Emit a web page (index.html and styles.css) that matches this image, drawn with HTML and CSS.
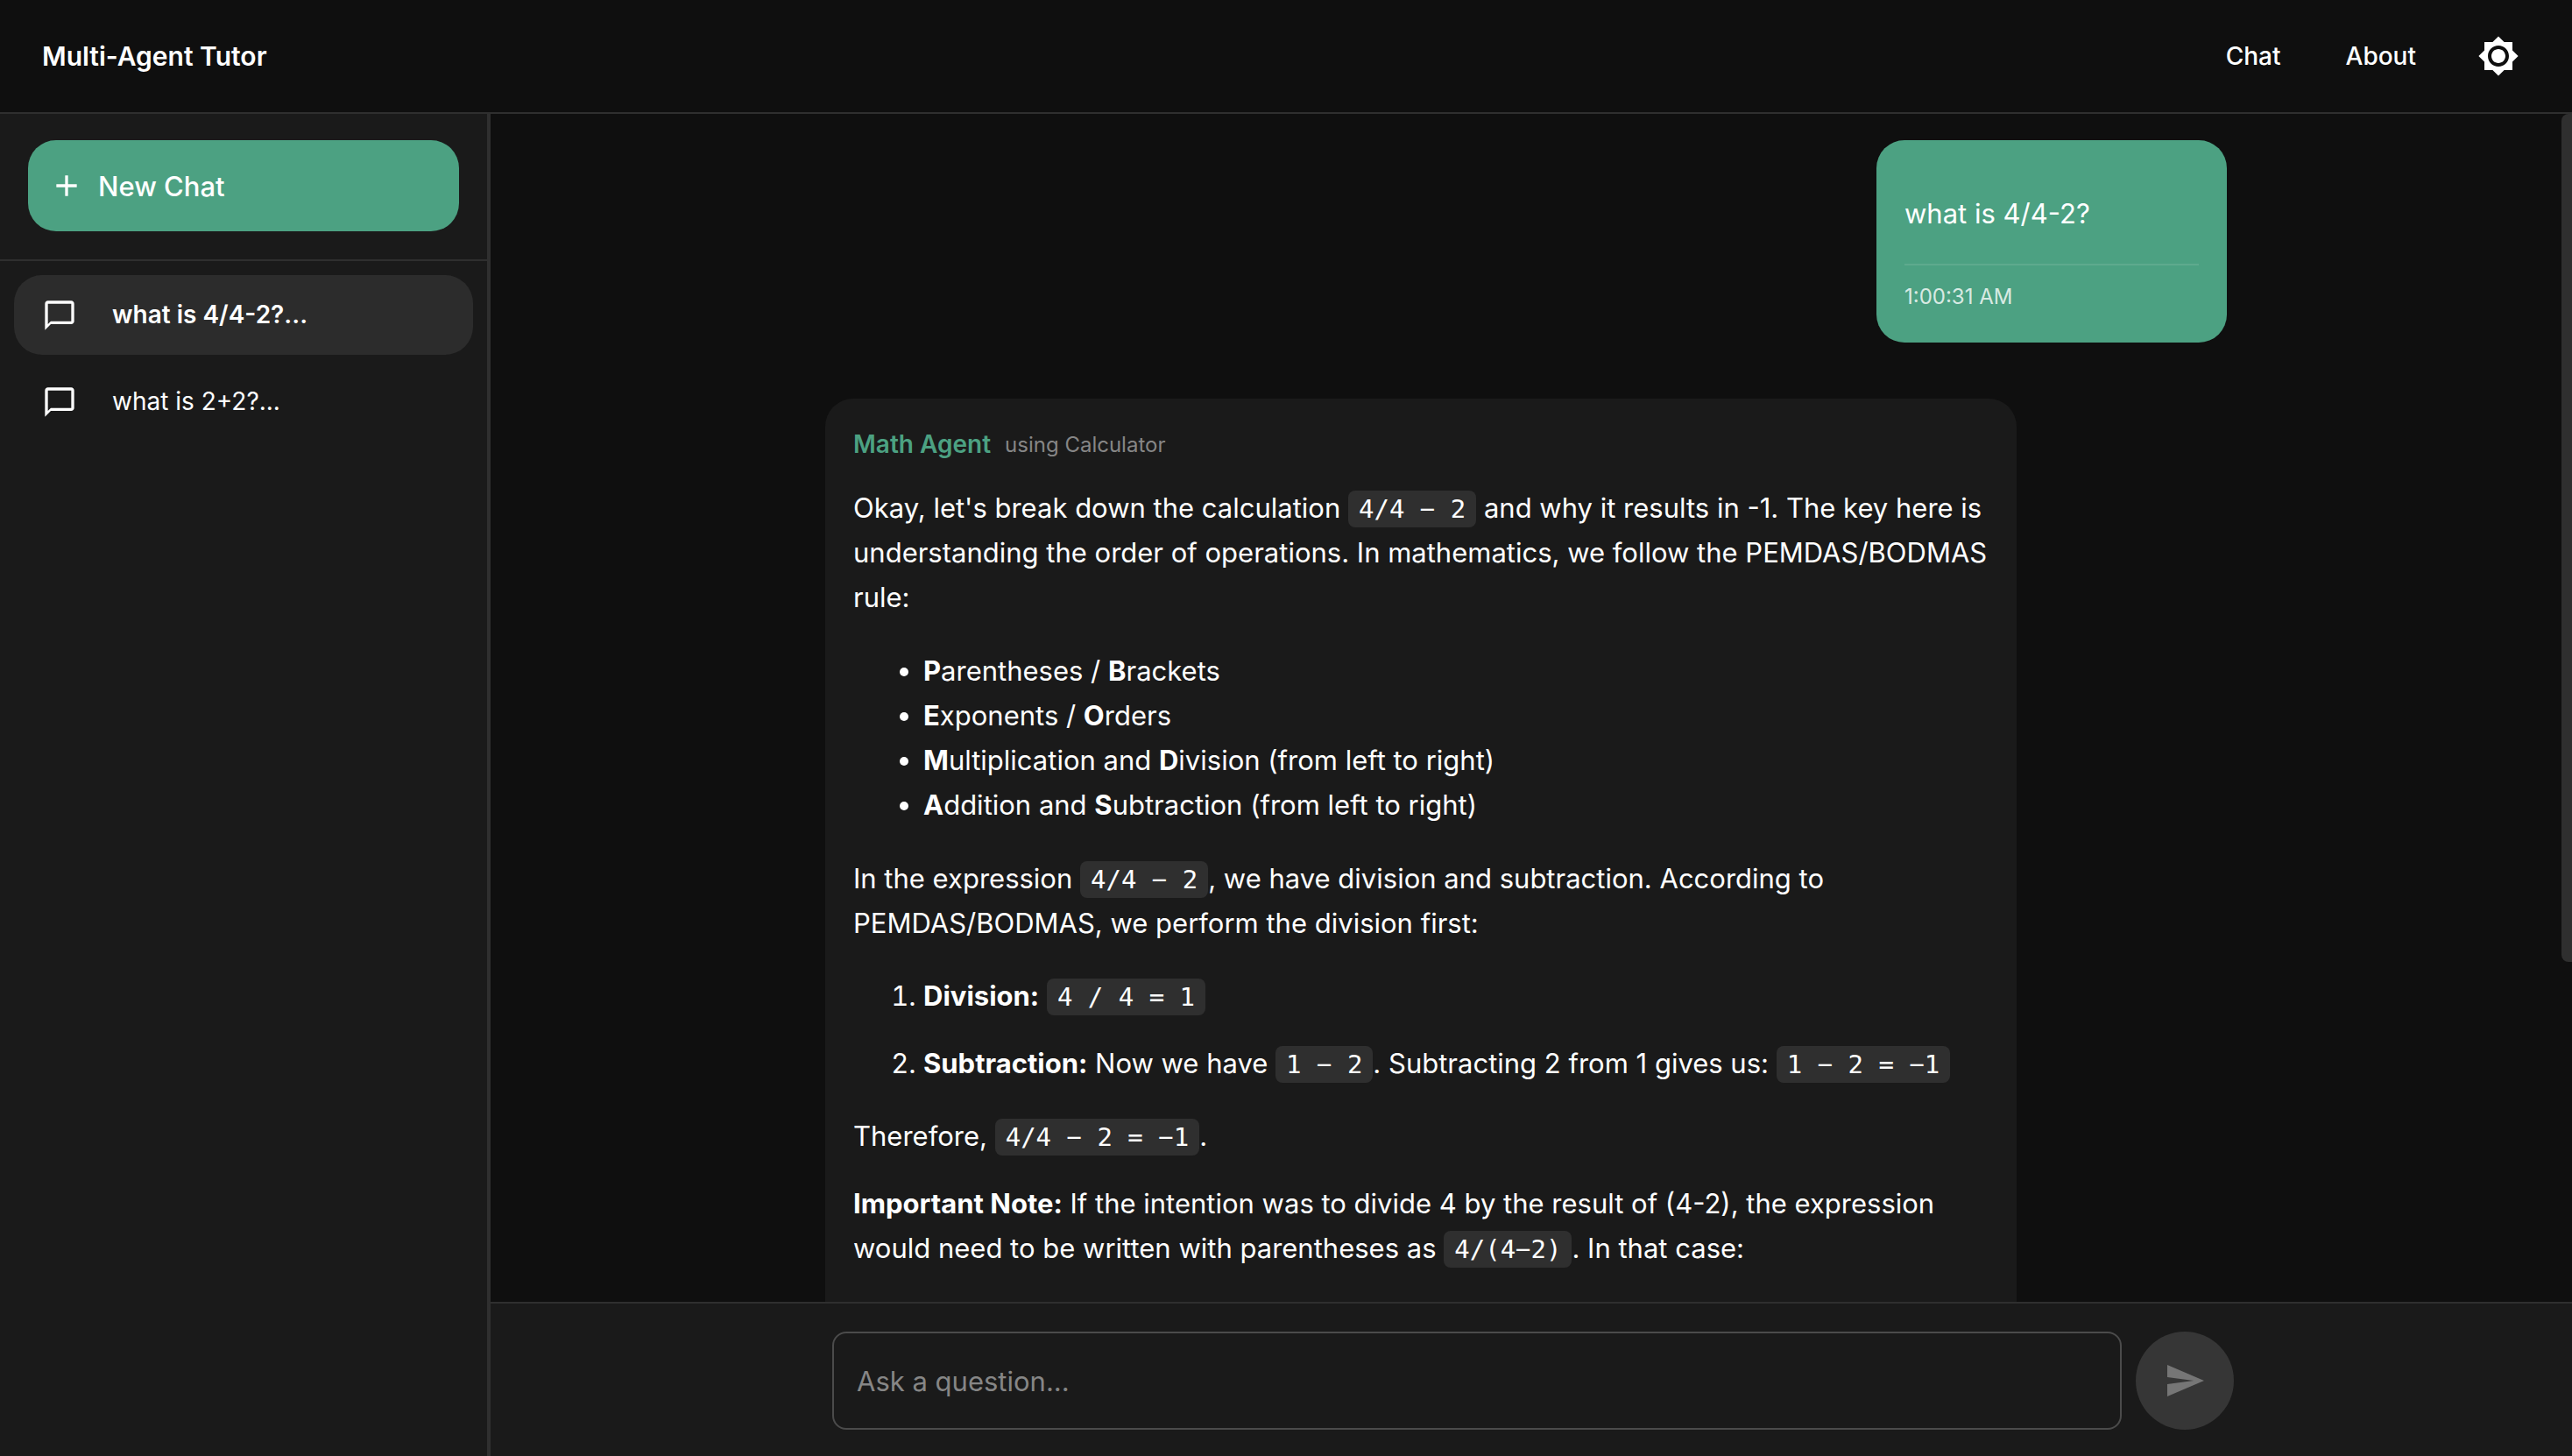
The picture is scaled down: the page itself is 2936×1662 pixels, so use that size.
FILE: index.html
```html
<!DOCTYPE html>
<html lang="en">
<head>
<meta charset="utf-8">
<meta name="viewport" content="width=device-width, initial-scale=1">
<title>Multi-Agent Tutor</title>
<link rel="stylesheet" href="styles.css">
</head>
<body>
<header class="topbar">
  <h1 class="brand">Multi-Agent Tutor</h1>
  <nav class="nav">
    <a class="nav-link" href="#chat">Chat</a>
    <a class="nav-link" href="#about">About</a>
    <button class="icon-button" type="button" aria-label="Toggle theme">
      <svg class="icon icon-lg" viewBox="0 0 24 24" aria-hidden="true"><path d="M20 8.69V4h-4.69L12 .69 8.69 4H4v4.69L.69 12 4 15.31V20h4.69L12 23.31 15.31 20H20v-4.69L23.31 12 20 8.69zM12 18c-3.31 0-6-2.69-6-6s2.69-6 6-6 6 2.69 6 6-2.69 6-6 6zm0-10c-2.21 0-4 1.79-4 4s1.79 4 4 4 4-1.79 4-4-1.79-4-4-4z"/></svg>
    </button>
  </nav>
</header>
<div class="layout">
  <aside class="sidebar">
    <div class="sidebar-top">
      <button class="new-chat" type="button">
        <svg class="icon" viewBox="0 0 24 24" aria-hidden="true"><path d="M19 13h-6v6h-2v-6H5v-2h6V5h2v6h6v2z"/></svg>
        New Chat
      </button>
    </div>
    <ul class="chat-list">
      <li><a class="chat-item is-active" href="#chat-2">
        <svg class="icon" viewBox="0 0 24 24" aria-hidden="true"><path d="M20 2H4c-1.1 0-2 .9-2 2v18l4-4h14c1.1 0 2-.9 2-2V4c0-1.1-.9-2-2-2zm0 14H6l-2 2V4h16v12z"/></svg>
        <span>what is 4/4-2?...</span>
      </a></li>
      <li><a class="chat-item" href="#chat-1">
        <svg class="icon" viewBox="0 0 24 24" aria-hidden="true"><path d="M20 2H4c-1.1 0-2 .9-2 2v18l4-4h14c1.1 0 2-.9 2-2V4c0-1.1-.9-2-2-2zm0 14H6l-2 2V4h16v12z"/></svg>
        <span>what is 2+2?...</span>
      </a></li>
    </ul>
  </aside>
  <main class="main">
    <div class="messages">
      <div class="thread">
        <article class="bubble bubble-user">
          <p>what is 4/4-2?</p>
          <footer class="bubble-time"><time>1:00:31 AM</time></footer>
        </article>
        <article class="bubble bubble-agent">
          <div class="agent-line"><span class="agent-name">Math Agent</span><span class="agent-tool">using Calculator</span></div>
          <p>Okay, let's break down the calculation <code>4/4 − 2</code> and why it results in -1. The key here is understanding the order of operations. In mathematics, we follow the PEMDAS/BODMAS rule:</p>
          <ul>
            <li><strong>P</strong>arentheses / <strong>B</strong>rackets</li>
            <li><strong>E</strong>xponents / <strong>O</strong>rders</li>
            <li><strong>M</strong>ultiplication and <strong>D</strong>ivision (from left to right)</li>
            <li><strong>A</strong>ddition and <strong>S</strong>ubtraction (from left to right)</li>
          </ul>
          <p>In the expression <code>4/4 − 2</code>, we have division and subtraction. According to PEMDAS/BODMAS, we perform the division first:</p>
          <ol>
            <li><strong>Division:</strong> <code>4 / 4 = 1</code></li>
            <li><strong>Subtraction:</strong> Now we have <code>1 − 2</code>. Subtracting 2 from 1 gives us: <code>1 − 2 = −1</code></li>
          </ol>
          <p>Therefore, <code>4/4 − 2 = −1</code>.</p>
          <p><strong>Important Note:</strong> If the intention was to divide 4 by the result of (4-2), the expression would need to be written with parentheses as <code>4/(4−2)</code>. In that case:</p>
        </article>
      </div>
      <div class="scroll-thumb"></div>
    </div>
    <div class="composer">
      <form class="composer-form">
        <input class="composer-input" type="text" placeholder="Ask a question..." aria-label="Ask a question">
        <button class="send" type="submit" aria-label="Send" disabled>
          <svg class="icon icon-lg" viewBox="0 0 24 24" aria-hidden="true"><path d="M2.01 21 23 12 2.01 3 2 10l15 2-15 2z"/></svg>
        </button>
      </form>
    </div>
  </main>
</div>
</body>
</html>
```
FILE: styles.css
```css
:root {
  --bg: #0f0f0f;
  --surface: #1a1a1a;
  --line: #2f2f2f;
  --green: #4ca182;
  --text: #ffffff;
}

* { box-sizing: border-box; }

body {
  margin: 0;
  height: 100vh;
  display: flex;
  flex-direction: column;
  background: var(--bg);
  color: var(--text);
  font-family: Inter, "Liberation Sans", sans-serif;
  font-size: 31px;
  line-height: 51px;
}

button, input { font: inherit; color: inherit; border: 0; }
a { color: inherit; text-decoration: none; }

.icon { width: 40px; height: 40px; fill: currentColor; flex: none; display: block; }
.icon-lg { width: 48px; height: 48px; }

/* Top bar */
.topbar {
  flex: none;
  height: 130px;
  padding: 0 44px 0 48px;
  border-bottom: 2px solid var(--line);
  display: flex;
  align-items: center;
  justify-content: space-between;
}
.brand { margin: 0; font-size: 30px; font-weight: 600; }
.nav { display: flex; align-items: center; gap: 36px; }
.nav-link { padding: 0 18px 0 20px; font-size: 28px; font-weight: 500; }
.icon-button { padding: 16px; background: none; }

/* Columns */
.layout { flex: 1; min-height: 0; display: flex; }

.sidebar {
  flex: none;
  width: 560px;
  background: var(--surface);
  border-right: 4px solid var(--line);
}
.sidebar-top { padding: 30px 32px 32px; border-bottom: 2px solid var(--line); }
.new-chat {
  width: 100%;
  height: 104px;
  padding: 0 24px;
  display: flex;
  align-items: center;
  gap: 16px;
  border-radius: 32px;
  background: var(--green);
  font-weight: 500;
}
.chat-list {
  margin: 0;
  padding: 16px;
  list-style: none;
  display: flex;
  flex-direction: column;
  gap: 8px;
}
.chat-item {
  height: 91px;
  padding: 0 32px;
  display: flex;
  align-items: center;
  gap: 40px;
  border-radius: 32px;
  font-size: 28px;
}
.chat-item.is-active { background: #2c2c2c; font-weight: 600; }

/* Conversation */
.main { flex: 1; min-width: 0; display: flex; flex-direction: column; }
.messages {
  flex: 1;
  min-height: 0;
  overflow: hidden;
  position: relative;
  padding: 30px 12px 0 0;
}
.scroll-thumb {
  position: absolute;
  top: 0;
  right: 0;
  width: 12px;
  height: 71.4%;
  border-radius: 8px 0 0 8px;
  background: var(--line);
}
.thread {
  max-width: 1600px;
  margin: 0 auto;
  display: flex;
  flex-direction: column;
  gap: 64px;
}
.bubble { padding: 32px; border-radius: 32px; }
.bubble p { margin: 26px 0; }
.bubble-user { align-self: flex-end; min-width: 400px; background: var(--green); }
.bubble-user p { margin-bottom: 32px; }
.bubble-time {
  padding-top: 16px;
  border-top: 2px solid rgba(255, 255, 255, 0.1);
  font-size: 24px;
  line-height: 40px;
  color: rgba(255, 255, 255, 0.8);
}
.bubble-agent {
  align-self: flex-start;
  width: 85%;
  padding-bottom: 80px;
  background: var(--surface);
}
.agent-line { display: flex; align-items: center; gap: 16px; line-height: 41px; }
.agent-name { font-size: 28px; font-weight: 600; color: var(--green); }
.agent-tool { font-size: 24px; color: #868686; }
.bubble ul, .bubble ol { padding-left: 80px; }
.bubble ul { margin: 33px 0; }
.bubble ol { margin: 32px 0; display: flex; flex-direction: column; gap: 26px; }
.bubble strong { font-weight: 700; }
code {
  padding: 4px 12px;
  border-radius: 8px;
  background: var(--line);
  font-family: "DejaVu Sans Mono", monospace;
  font-size: 29px;
  line-height: 1;
}

/* Composer */
.composer {
  flex: none;
  padding: 32px 32px 30px 36px;
  background: var(--surface);
  border-top: 2px solid var(--line);
}
.composer-form { max-width: 1600px; margin: 0 auto; display: flex; gap: 16px; }
.composer-input {
  flex: 1;
  min-width: 0;
  height: 112px;
  padding: 0 26px;
  border: 2px solid #4b4b4b;
  border-radius: 16px;
  background: transparent;
}
.composer-input::placeholder { color: #868686; opacity: 1; }
.send {
  flex: none;
  width: 112px;
  height: 112px;
  padding: 0;
  display: grid;
  place-items: center;
  border-radius: 50%;
  background: #363636;
  color: #767676;
}
```
